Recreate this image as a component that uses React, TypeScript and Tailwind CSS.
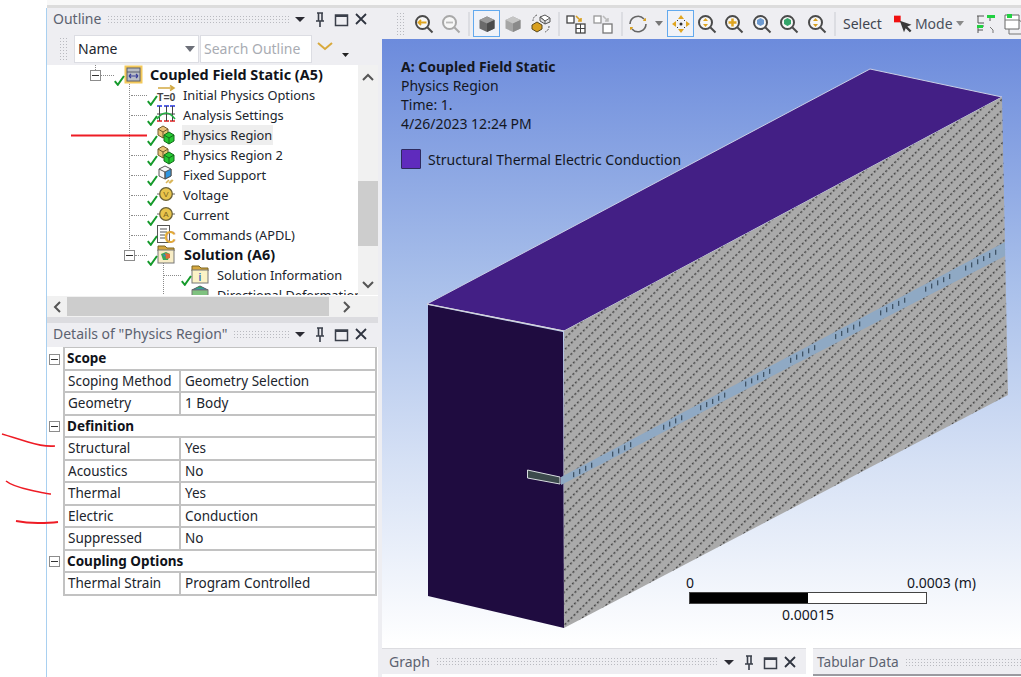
import React from "react";

const FONT = "font-['Noto_Sans','Open_Sans',sans-serif]";

function Grip({ className = "" }: { className?: string }) {
  return <div className={"bg-[radial-gradient(#b9bac0_0.7px,transparent_0.8px)] bg-[length:3px_3px] " + className} />;
}

function PanelControls() {
  return (
    <svg width="73" height="18" viewBox="0 0 73 18" className="shrink-0">
      <path d="M0 7h10l-5 5z" fill="#2b2b33" />
      <path d="M22 3h6M23.5 3v8M27 3v8M21 11h8M25 11v6" stroke="#3a3f4a" strokeWidth="1.6" fill="none" />
      <rect x="40.5" y="5" width="12" height="10.5" fill="none" stroke="#3a3f4a" strokeWidth="1.5" />
      <path d="M40 6h13" stroke="#3a3f4a" strokeWidth="2" />
      <path d="M61 4l10 10M71 4L61 14" stroke="#2f3440" strokeWidth="1.8" />
    </svg>
  );
}

function PanelHeader({ title }: { title: string }) {
  return (
    <div className="flex items-center h-6 bg-[#eeeef2] pl-[6px] pr-[10px] pb-[2px] gap-[6px]">
      <span className="text-[14px] text-[#5c6270] whitespace-nowrap leading-none">{title}</span>
      <Grip className="flex-1 h-[9px]" />
      <PanelControls />
    </div>
  );
}

function Check() {
  return (
    <svg width="11" height="11" viewBox="0 0 11 11" className="absolute left-0 bottom-[-1px] z-10">
      <path d="M0.8 6.2l3 3.6L10 1" stroke="#159a2b" strokeWidth="2" fill="none" />
    </svg>
  );
}

function Svg({ children }: { children: React.ReactNode }) {
  return (
    <svg width="20" height="20" viewBox="0 0 20 20" className="absolute right-[-2px] top-0 overflow-visible">
      {children}
    </svg>
  );
}

const IconStatic = () => (
  <Svg>
    <rect x="0.5" y="0.5" width="18" height="18" fill="#f4c95a" />
    <rect x="3" y="3" width="13" height="13" fill="#b9bcc4" stroke="#5a5f6a" />
    <path d="M3 7h13" stroke="#5a5f6a" />
    <path d="M5 11h9M5 11l2-2M5 11l2 2M14 11l-2-2M14 11l-2 2" stroke="#3a3f9a" strokeWidth="1.2" fill="none" />
  </Svg>
);
const IconInit = () => (
  <Svg>
    <path d="M1 3h15M13 0.5l4 2.5-4 2.5" stroke="#d2a943" strokeWidth="1.5" fill="none" />
    <text x="0" y="16" fontSize="10.5" fontWeight="700" fill="#444" fontFamily="Liberation Sans">T=0</text>
  </Svg>
);
const IconAnalysis = () => (
  <Svg>
    <path d="M0 1h5M7 1h5M13 1h5" stroke="#2030e0" strokeWidth="1.5" />
    <path d="M0 16h5M7 16h5M13 16h5" stroke="#e02020" strokeWidth="1.5" />
    <path d="M2.5 1v15M9.5 1v15M15.5 1v15M0 9h18" stroke="#444" strokeWidth="1" />
    <path d="M0 14Q9 2 18 14" stroke="#20b040" strokeWidth="1.5" fill="none" />
  </Svg>
);
const IconPhysics = () => (
  <Svg>
    <path d="M1 4l5-3 5 3v6l-5 3-5-3z" fill="#e7c277" stroke="#6d5a2c" />
    <path d="M1 4l5 3 5-3M6 7v6" stroke="#6d5a2c" fill="none" />
    <path d="M7 10l5-3 5 3v6l-5 3-5-3z" fill="#26c832" stroke="#156b1d" />
    <path d="M7 10l5 3 5-3M12 13v6" stroke="#156b1d" fill="none" />
  </Svg>
);
const IconFixed = () => (
  <Svg>
    <path d="M2 4l6-3 6 3v7l-6 3-6-3z" fill="#f4f4f6" stroke="#555" />
    <path d="M8 7l6-3v7l-6 3z" fill="#2f95e0" stroke="#555" />
    <path d="M2 4l6 3v7" stroke="#555" fill="none" />
    <path d="M9 18l3-3M13 18l3-3M12 18l3-3" stroke="#d9b65a" strokeWidth="1.6" />
  </Svg>
);
const IconSource = ({ l }: { l: string }) => (
  <Svg>
    <path d="M0 9h18" stroke="#666" strokeWidth="1" />
    <circle cx="9" cy="9" r="6.3" fill="#e8c44c" stroke="#6b6238" strokeWidth="1.3" />
    <text x="9" y="12" textAnchor="middle" fontSize="8" fill="#7a6420" fontFamily="Liberation Sans">{l}</text>
  </Svg>
);
const IconCmd = () => (
  <Svg>
    <rect x="0.5" y="0.5" width="12" height="17" fill="#fff" stroke="#555" />
    <path d="M3 4h7M3 7h7M3 10h5M3 13h5" stroke="#555" strokeWidth="1.1" />
    <text x="7.5" y="18" fontSize="16" fontWeight="700" fill="#e0a83a" fontFamily="Liberation Sans">C</text>
  </Svg>
);
const IconSolution = () => (
  <Svg>
    <path d="M1 1h7l2 2h7v3H1z" fill="#d6a83f" stroke="#7a6423" />
    <rect x="1" y="5" width="16" height="13" fill="#f8edc6" stroke="#777" />
    <path d="M4 9l5-2 4 2-2 6-5 0z" fill="#3aa657" />
    <path d="M8 8l5 1 0 4-4 1z" fill="#df6a3a" />
    <path d="M6 9l3 1-2 2z" fill="#3b84d6" />
  </Svg>
);
const IconInfo = () => (
  <Svg>
    <path d="M1 1h7l2 2h7v3H1z" fill="#d6a83f" stroke="#7a6423" />
    <rect x="1" y="5" width="16" height="13" fill="#fbf3c6" stroke="#777" />
    <text x="9" y="16" textAnchor="middle" fontSize="10" fontWeight="700" fill="#3a6fc0" fontFamily="Liberation Sans">i</text>
  </Svg>
);
const IconDeform = () => (
  <Svg>
    <path d="M1 5l8-4 8 4z" fill="#2f95e0" stroke="#555" />
    <path d="M4 3.5l5-2 4 2z" fill="#3aa657" />
    <rect x="1" y="5" width="16" height="13" fill="#7fc27f" stroke="#777" />
  </Svg>
);

function Expander() {
  return (
    <div className="w-[11px] h-[11px] border border-[#8c8c8c] bg-white flex items-center justify-center shrink-0">
      <div className="w-[7px] h-px bg-[#333]" />
    </div>
  );
}

function Dots({ w }: { w: string }) {
  return <div className={"border-t border-dotted border-[#8a8a8a] shrink-0 " + w} />;
}

function Row(p: {
  pl: string;
  dots: string;
  exp?: boolean;
  icon: React.ReactNode;
  label: string;
  bold?: boolean;
  sel?: boolean;
  gap: string;
}) {
  return (
    <div className={"flex items-center h-5 shrink-0 " + p.pl}>
      {p.exp && <Expander />}
      <Dots w={p.dots} />
      <div className="relative w-[28px] h-5 shrink-0">
        <Check />
        {p.icon}
      </div>
      <span
        className={
          "leading-5 px-[1px] whitespace-nowrap " +
          p.gap +
          (p.bold ? " font-bold text-[14.4px] text-[#10131a]" : " text-[12.8px] text-[#20242c]") +
          (p.sel ? " bg-[#eeeeee]" : "")
        }
      >
        {p.label}
      </span>
    </div>
  );
}

function Tree() {
  return (
    <div className="relative flex-1 h-full overflow-hidden flex flex-col">
      <div className="absolute left-[82px] top-[6px] h-[180px] border-l border-dotted border-[#8a8a8a]" />
      <div className="absolute left-[116px] top-[195px] h-[40px] border-l border-dotted border-[#8a8a8a]" />
      <div className="absolute left-[48px] top-0 h-[5px] border-l border-dotted border-[#8a8a8a]" />
      <Row pl="pl-[43px]" exp dots="w-[13px]" icon={<IconStatic />} label="Coupled Field Static (A5)" bold gap="ml-[7px]" />
      <Row pl="pl-[84px]" dots="w-[16px]" icon={<IconInit />} label="Initial Physics Options" gap="ml-[7px]" />
      <Row pl="pl-[84px]" dots="w-[16px]" icon={<IconAnalysis />} label="Analysis Settings" gap="ml-[7px]" />
      <Row pl="pl-[84px]" dots="w-[16px]" icon={<IconPhysics />} label="Physics Region" sel gap="ml-[7px]" />
      <Row pl="pl-[84px]" dots="w-[16px]" icon={<IconPhysics />} label="Physics Region 2" gap="ml-[7px]" />
      <Row pl="pl-[84px]" dots="w-[16px]" icon={<IconFixed />} label="Fixed Support" gap="ml-[7px]" />
      <Row pl="pl-[84px]" dots="w-[16px]" icon={<IconSource l="V" />} label="Voltage" gap="ml-[7px]" />
      <Row pl="pl-[84px]" dots="w-[16px]" icon={<IconSource l="A" />} label="Current" gap="ml-[7px]" />
      <Row pl="pl-[84px]" dots="w-[16px]" icon={<IconCmd />} label="Commands (APDL)" gap="ml-[7px]" />
      <Row pl="pl-[77px]" exp dots="w-[12px]" icon={<IconSolution />} label="Solution (A6)" bold gap="ml-[8px]" />
      <Row pl="pl-[117px]" dots="w-[17px]" icon={<IconInfo />} label="Solution Information" gap="ml-[7px]" />
      <Row pl="pl-[117px]" dots="w-[17px]" icon={<IconDeform />} label="Directional Deformation" gap="ml-[7px]" />
    </div>
  );
}

function Chevron({ d }: { d: string }) {
  return (
    <svg width="12" height="12" viewBox="0 0 12 12">
      <path d={d} stroke="#555" strokeWidth="2" fill="none" />
    </svg>
  );
}

function OutlinePanel() {
  return (
    <>
      <PanelHeader title="Outline" />
      <div className="flex items-center h-[33px] bg-[#eeeef2] pl-[12px] gap-[1px]">
        <Grip className="w-[8px] h-[24px] mr-[6px]" />
        <div className="flex items-center w-[125px] h-[28px] bg-white border border-[#dcdde3] pl-[3px] pr-[2px]">
          <span className="flex-1 text-[14px] text-[#22262e]">Name</span>
          <svg width="12" height="8" viewBox="0 0 12 8"><path d="M1 1h10L6 7z" fill="#6c6f78" /></svg>
        </div>
        <div className="w-[112px] h-[28px] bg-white border border-[#dcdde3] pl-[3px] flex items-center">
          <span className="text-[14px] text-[#a9acb3] whitespace-nowrap">Search Outline</span>
        </div>
        <svg width="40" height="24" viewBox="0 0 40 24" className="shrink-0">
          <path d="M5 6l7 6 7-6" stroke="#d8a93c" strokeWidth="2" fill="none" />
          <path d="M29 16h7l-3.5 4z" fill="#222" />
        </svg>
      </div>
      <div className="flex h-[230px] bg-white">
        <Tree />
        <div className="w-[20px] bg-[#f1f1f1] flex flex-col items-center shrink-0">
          <div className="h-[6px]" />
          <Chevron d="M1 9l5-5 5 5" />
          <div className="h-[98px]" />
          <div className="w-full h-[65px] bg-[#cdcdcd]" />
          <div className="flex-1" />
          <Chevron d="M1 3l5 5 5-5" />
          <div className="h-[4px]" />
        </div>
      </div>
      <div className="flex items-center h-[21px] bg-[#f1f1f1] px-[5px] mt-[1px]">
        <Chevron d="M8 1L3 6l5 5" />
        <div className="w-[262px] h-[19px] bg-[#cdcdcd] ml-[3px]" />
        <div className="flex-1" />
        <Chevron d="M4 1l5 5-5 5" />
        <div className="w-[21px]" />
      </div>
    </>
  );
}

function SectionRow({ title }: { title: string }) {
  return (
    <div className="flex h-[22.5px]">
      <div className="w-[16px] flex items-center pl-[2px] shrink-0">
        <Expander />
      </div>
      <div className="flex-1 flex items-center pl-[2px] border-2 border-t-0 border-[#c2c2c2] font-bold text-[13.5px] text-[#10131a] bg-white">
        {title}
      </div>
    </div>
  );
}

function PropRow({ k, v }: { k: string; v: string }) {
  return (
    <div className="flex h-[22.5px]">
      <div className="w-[16px] shrink-0" />
      <div className="flex-1 flex items-center border-2 border-t-0 border-[#c2c2c2] text-[13.5px] text-[#20242c] bg-white">
        <div className="w-[116px] pl-[3px] shrink-0 h-full flex items-center border-r-2 border-[#c2c2c2] whitespace-nowrap">{k}</div>
        <div className="pl-[4px] whitespace-nowrap">{v}</div>
      </div>
    </div>
  );
}

function DetailsPanel() {
  return (
    <>
      <PanelHeader title={'Details of "Physics Region"'} />
      <div className="flex-1 bg-white flex flex-col pr-[1px]">
        <div className="h-[1px] ml-[16px] bg-[#c2c2c2]" />
        <SectionRow title="Scope" />
        <PropRow k="Scoping Method" v="Geometry Selection" />
        <PropRow k="Geometry" v="1 Body" />
        <SectionRow title="Definition" />
        <PropRow k="Structural" v="Yes" />
        <PropRow k="Acoustics" v="No" />
        <PropRow k="Thermal" v="Yes" />
        <PropRow k="Electric" v="Conduction" />
        <PropRow k="Suppressed" v="No" />
        <SectionRow title="Coupling Options" />
        <PropRow k="Thermal Strain" v="Program Controlled" />
      </div>
    </>
  );
}

function Mag({ inner, dim, ml }: { inner: React.ReactNode; dim?: boolean; ml: string }) {
  const c = dim ? "#a8a8a8" : "#4a4a4a";
  return (
    <svg width="20" height="20" viewBox="0 0 20 20" className={"shrink-0 " + ml}>
      <circle cx="8.5" cy="8.5" r="6.5" fill="#f7f7f7" stroke={c} strokeWidth="2" />
      <path d="M13.5 13.5l5 5" stroke={c} strokeWidth="2" />
      {inner}
    </svg>
  );
}

const TSep = ({ ml }: { ml: string }) => <div className={"w-[2px] h-[24px] bg-[#dcdde2] shrink-0 " + ml} />;
const Boxed = ({ children, ml }: { children: React.ReactNode; ml: string }) => (
  <div className={"w-[27px] h-[27px] border-[1.5px] border-[#62a9ee] flex items-center justify-center shrink-0 bg-[#f0f2f8] " + ml}>
    {children}
  </div>
);

function Cube({ fill, top, side }: { fill: string; top: string; side: string }) {
  return (
    <svg width="18" height="18" viewBox="0 0 18 18" className="shrink-0">
      <path d="M1.5 5L9 1.5 16.5 5v8.5L9 17l-7.5-3.5z" fill={fill} />
      <path d="M1.5 5L9 1.5 16.5 5 9 8.5z" fill={top} />
      <path d="M9 8.5l7.5-3.5v8.5L9 17z" fill={side} />
    </svg>
  );
}

function Toolbar() {
  return (
    <div className="flex items-center h-[31px] bg-[#eeeef2] pl-[14px] overflow-hidden">
      <Grip className="w-[8px] h-[24px] shrink-0 mr-[10px]" />
      <Mag ml="" inner={<path d="M4.5 8.5h8M7 6L4.5 8.5 7 11" stroke="#e0a520" strokeWidth="1.8" fill="none" />} />
      <Mag ml="ml-[7px]" dim inner={<path d="M5 8.5h7" stroke="#bbb" strokeWidth="1.8" />} />
      <TSep ml="ml-[7px]" />
      <Boxed ml="ml-[3px]"><Cube fill="#6a6a6a" top="#9a9a9a" side="#4b4b4b" /></Boxed>
      <div className="ml-[4px] shrink-0"><Cube fill="#a5a5a5" top="#c5c5c5" side="#8a8a8a" /></div>
      <svg width="20" height="20" viewBox="0 0 20 20" className="shrink-0 ml-[9px]">
        <path d="M9 3l5-2 5 3-5 3z" fill="#fff" stroke="#555" />
        <path d="M9 3v4l5 3V7zM19 4v4l-5 2" fill="#ddd" stroke="#555" />
        <path d="M1 11l5-3 5 3v4l-5 3-5-3z" fill="#d8a020" stroke="#5a4a20" />
        <path d="M6 1a6 6 0 0 0-4 6M18 12a6 6 0 0 1-4 6" stroke="#555" strokeDasharray="2 1" fill="none" />
      </svg>
      <TSep ml="ml-[7px]" />
      <svg width="20" height="20" viewBox="0 0 20 20" className="shrink-0 ml-[6px]">
        <rect x="1" y="2" width="7" height="7" fill="#fff" stroke="#444" strokeWidth="1.3" />
        <rect x="10" y="10" width="9" height="9" fill="#fff" stroke="#444" strokeWidth="1.3" />
        <path d="M14.5 10v9M10 14.5h9" stroke="#444" />
        <path d="M10 2l5 5M15 4v3h-3" stroke="#d8a020" strokeWidth="1.6" fill="none" />
      </svg>
      <svg width="20" height="20" viewBox="0 0 20 20" className="shrink-0 ml-[7px]">
        <rect x="1" y="2" width="7" height="7" fill="#fff" stroke="#999" strokeWidth="1.3" />
        <rect x="10" y="10" width="9" height="9" fill="#fff" stroke="#777" strokeWidth="1.3" />
        <path d="M10 2l5 5M15 4v3h-3" stroke="#bbb" strokeWidth="1.6" fill="none" />
      </svg>
      <TSep ml="ml-[8px]" />
      <svg width="20" height="20" viewBox="0 0 20 20" className="shrink-0 ml-[5px]">
        <path d="M2 10a8 8 0 0 1 14-5" stroke="#666" strokeWidth="1.6" fill="none" />
        <path d="M18 10a8 8 0 0 1-14 5" stroke="#666" strokeWidth="1.6" fill="none" />
        <path d="M16 5l2-1v3h-3zM4 15l-2 1v-3h3z" fill="#d8a020" />
      </svg>
      <svg width="10" height="6" viewBox="0 0 10 6" className="shrink-0 ml-[6px]"><path d="M1 0h8L5 5z" fill="#777" /></svg>
      <Boxed ml="ml-[3px]">
        <svg width="20" height="20" viewBox="0 0 20 20">
          <path d="M10 1l3 4H7zM10 19l3-4H7zM1 10l4-3v6zM19 10l-4-3v6z" fill="#e0a520" />
          <circle cx="10" cy="10" r="1.5" fill="#333" />
          <path d="M6 6l1 1M13 13l1 1M14 6l-1 1M6 14l1-1" stroke="#333" />
        </svg>
      </Boxed>
      <Mag ml="ml-[3px]" inner={<path d="M8.5 4l2.5 3H6zM8.5 13L11 10H6z" fill="#e0a520" />} />
      <Mag ml="ml-[7px]" inner={<path d="M4.5 8.5h8M8.5 4.5v8" stroke="#e0a520" strokeWidth="2.5" />} />
      <Mag ml="ml-[8px]" inner={<path d="M5 6l3.5-2L12 6v4l-3.5 2L5 10z" fill="#6d9ad0" />} />
      <Mag ml="ml-[7px]" inner={<path d="M5 6l3.5-2L12 6v4l-3.5 2L5 10z" fill="#35a56a" />} />
      <Mag ml="ml-[8px]" inner={<path d="M8.5 4l2.5 3H6zM8.5 13L11 10H6z" fill="#d8a020" />} />
      <TSep ml="ml-[7px]" />
      <span className="ml-[7px] text-[14px] text-[#3f4550] shrink-0">Select</span>
      <svg width="20" height="20" viewBox="0 0 24 20" className="ml-[12px] shrink-0">
        <rect x="0" y="0" width="8" height="8" fill="#f01010" />
        <path d="M7 6l14 5-5 2 5 5-2 2-5-5-2 5z" fill="#3a3a3a" />
      </svg>
      <span className="ml-[1px] text-[14px] text-[#4a505c] shrink-0">Mode</span>
      <svg width="8" height="5" viewBox="0 0 8 5" className="ml-[3px] shrink-0"><path d="M0 0h8L4 5z" fill="#8a8a8a" /></svg>
      <svg width="20" height="20" viewBox="0 0 20 20" className="shrink-0 ml-[12px]">
        <path d="M1 2h7M2 2v7h6M12 2h7M14 2v5M2 12h6M2 12v7M2 16h5" stroke="#555" fill="none" />
        <rect x="11" y="1" width="8" height="3" fill="#20d040" />
        <rect x="1" y="11" width="6" height="3" fill="#20d040" />
        <path d="M14 13l3 3v3" stroke="#777" fill="none" />
      </svg>
      <svg width="22" height="22" viewBox="0 0 22 22" className="ml-[7px] shrink-0">
        <path d="M2 2h14v14H2z" fill="#fff" stroke="#666" />
        <path d="M2 7h14l4 3v11H6v-5" fill="none" stroke="#777" />
        <rect x="4" y="1" width="5" height="4" fill="#20d040" />
      </svg>
    </div>
  );
}

function Model() {
  const ticks: [number, number][] = [];
  for (const [sx, n] of [
    [573, 4], [612, 4], [663, 4], [700, 5], [745, 5], [790, 5], [835, 5], [880, 5], [925, 5], [965, 6],
  ] as [number, number][]) {
    for (let i = 0; i < n; i++) {
      const x = sx + i * 6;
      ticks.push([x, 481 - (x - 561) * 0.527]);
    }
  }
  return (
    <svg className="absolute left-0 top-0" width="639" height="606" viewBox="382 39 639 606">
      <defs>
        <pattern id="hatch" width="4.24" height="7.78" patternUnits="userSpaceOnUse" patternTransform="rotate(-45)">
          <rect width="4.24" height="7.78" fill="#aaaaaa" />
          <rect width="2.1" height="1.5" fill="#484848" />
        </pattern>
      </defs>
      <path d="M427 304L564 331L1002 97L870 69Z" fill="#431f85" stroke="#c9cfe6" strokeWidth="1" />
      <path d="M428 305L563 332L564 628L428 596Z" fill="#1f0c40" />
      <path d="M564 331L1002 97L1008 395L564 628Z" fill="url(#hatch)" />
      <path d="M427 304L564 331" stroke="#d5d5da" strokeWidth="1.2" />
      <path d="M561 477L1005 242L1005 256L561 485Z" fill="#8fa9c4" />
      {ticks.map(([x, y], i) => (
        <rect key={i} x={x} y={y - 2.5} width="1.3" height="5" fill="#2c3e50" opacity="0.8" />
      ))}
      <path d="M527.5 470L560 477L560 484L527.5 478Z" fill="#3c4a4c" stroke="#d8dde0" strokeWidth="1" />
    </svg>
  );
}

function Canvas() {
  return (
    <div className="relative flex-1 overflow-hidden bg-[linear-gradient(to_bottom,#6c8bdc_0%,#a8bfea_40%,#d6e1f5_70%,#ffffff_100%)]">
      <Model />
      <div className="relative pl-[19px] pt-[18px] text-[14px] leading-[19px] text-[#14171f]">
        <div className="font-bold">A: Coupled Field Static</div>
        <div>Physics Region</div>
        <div>Time: 1.</div>
        <div>4/26/2023 12:24 PM</div>
        <div className="flex items-center mt-[16px] gap-[7px]">
          <div className="w-[20px] h-[20px] bg-[#5f2bbd] border-[1.5px] border-[#2e2a5e] rounded-[1px]" />
          <span>Structural Thermal Electric Conduction</span>
        </div>
      </div>
      <div className="absolute left-[302px] top-[535px] w-[300px] text-[14px] text-[#14171f]">
        <div className="flex justify-between leading-[18px] pr-[8px] pl-[2px]">
          <span>0</span>
          <span>0.0003 (m)</span>
        </div>
        <div className="flex w-[238px] h-[12px] border-[1.5px] border-[#444] bg-white ml-[5px]">
          <div className="w-1/2 bg-black" />
        </div>
        <div className="w-[238px] ml-[5px] text-center leading-[18px] mt-[2px]">0.00015</div>
      </div>
    </div>
  );
}

function Scribbles() {
  return (
    <svg className="absolute left-0 top-0 pointer-events-none" width="160" height="677" viewBox="0 0 160 677">
      <path d="M71 135.5H147" stroke="#ee1c25" strokeWidth="2" fill="none" />
      <path d="M2 434Q12 437 28 442T55 446" stroke="#ee1c25" strokeWidth="1.6" fill="none" />
      <path d="M6 481Q12 486 30 490T51 494" stroke="#ee1c25" strokeWidth="1.6" fill="none" />
      <path d="M16 521Q26 523 38 523T58 522" stroke="#ee1c25" strokeWidth="1.8" fill="none" />
    </svg>
  );
}

export default function App() {
  return (
    <div className={"relative w-[1021px] h-[677px] overflow-hidden bg-white flex flex-col " + FONT}>
      <div className="h-[5px] bg-[#f8f8f8] ml-[47px] shrink-0" />
      <div className="h-[3px] bg-[#dcdcdc] ml-[47px] shrink-0" />
      <div className="flex flex-1 min-h-0">
        <div className="w-[46px] shrink-0 bg-white" />
        <div className="w-px bg-[#a9d0f0] shrink-0" />
        <div className="w-[331px] shrink-0 flex flex-col">
          <OutlinePanel />
          <div className="h-[6px] bg-[#dcdce0]" />
          <DetailsPanel />
        </div>
        <div className="w-[4px] bg-[#eeeef2] shrink-0" />
        <div className="flex-1 flex flex-col min-w-0">
          <Toolbar />
          <Canvas />
          <div className="h-[32px] shrink-0 bg-white flex gap-[7px] pt-[3px]">
            <div className="w-[424px] shrink-0">
              <div className="flex items-center h-[26px] bg-[#eeeef2] border-t border-[#dcdce0] pl-[7px] pr-[9px] gap-[6px]">
                <span className="text-[14px] text-[#5c6270] whitespace-nowrap">Graph</span>
                <Grip className="flex-1 h-[9px]" />
                <PanelControls />
              </div>
            </div>
            <div className="flex-1 flex items-center h-[28px] bg-[#eeeef2] border-t border-b-2 border-t-[#dcdce0] border-b-[#9a9aa0] pl-[4px] pt-[1px] gap-[6px]">
              <span className="text-[13.7px] text-[#5c6270] whitespace-nowrap">Tabular Data</span>
              <Grip className="flex-1 h-[9px]" />
            </div>
          </div>
        </div>
      </div>
      <Scribbles />
    </div>
  );
}
